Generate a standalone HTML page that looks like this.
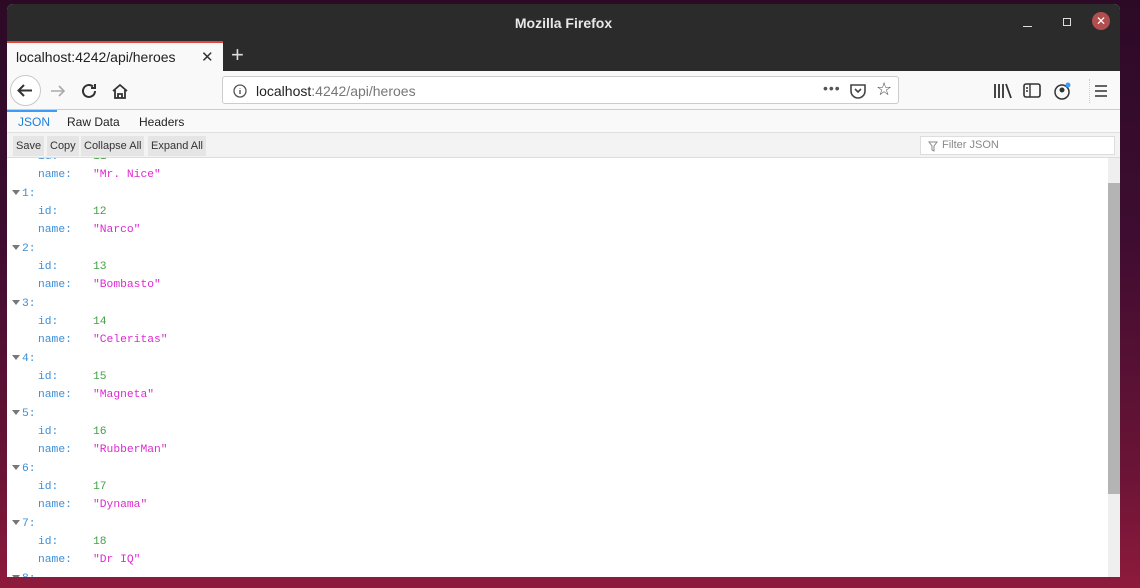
<!DOCTYPE html>
<html><head><meta charset="utf-8"><style>
*{margin:0;padding:0;box-sizing:border-box}
body{width:1140px;height:588px;overflow:hidden;position:relative;font-family:"Liberation Sans","DejaVu Sans",sans-serif;
background:linear-gradient(180deg,#2c0a26 0%,#3e0c30 40%,#6a1436 80%,#8e1a3c 100%)}
.win{position:absolute;left:7px;top:4px;width:1113px;height:573px;background:#fff;border-radius:6px 6px 0 0;overflow:hidden}
.title{position:absolute;left:0;top:0;width:100%;height:67px;background:#2b2b2b}
.title .t{position:absolute;top:11px;width:100%;text-align:center;color:#e8e8e8;font-weight:bold;font-size:14px}
.tab{position:absolute;left:0;top:37px;width:216px;height:30px;background:#f9f9fa;border-top:2px solid #e0473b}
.tab .l{position:absolute;left:9px;top:6px;font-size:14px;color:#222}
.tab .x{position:absolute;left:194px;top:5px;font-size:15px;color:#333}
.plus{position:absolute;left:224px;top:38px;color:#ddd;font-size:22px}
.nav{position:absolute;left:0;top:67px;width:100%;height:39px;background:#f9f9fa;border-bottom:1px solid #ccc}
.back{position:absolute;left:3px;top:4px;width:31px;height:31px;border-radius:50%;border:1px solid #c8c8c8;background:#fff}
.url{position:absolute;left:215px;top:5px;width:677px;height:28px;border:1px solid #ccc;border-radius:3px;background:#fff}
.url .u{position:absolute;left:33px;top:6px;font-size:14px;color:#222}
.url .u span{color:#777}
.jtabs{position:absolute;left:0;top:106px;width:100%;height:23px;background:#f9f9fa;border-bottom:1px solid #e0e0e0;font-size:12px}
.jtabs span{position:absolute;top:5px;color:#222}
.bar{position:absolute;left:0;top:129px;width:100%;height:25px;background:#f3f3f4;border-bottom:1px solid #ddd;font-size:11px}
.btn{position:absolute;top:3px;height:20px;background:#e5e5e6;color:#333;padding:4px 3px 0}
.filter{position:absolute;left:913px;top:3px;width:195px;height:19px;background:#fff;border:1px solid #ddd;color:#888;padding:2px 0 0 21px}
.content{position:absolute;left:0;top:154px;width:1101px;height:419px;overflow:hidden;background:#fff;font-family:"Liberation Mono","DejaVu Sans Mono",monospace;font-size:11.3px}
.row{position:absolute;height:18px;line-height:18px}
.k{color:#3c8fd6}.n{color:#43a047}.s{color:#dd2ad0}
.sb{position:absolute;left:1101px;top:154px;width:12px;height:419px;background:#efefef}
.th{position:absolute;left:1101px;top:179px;width:12px;height:311px;background:#b4b4b4}
.tri{display:inline-block;width:0;height:0;border-left:4px solid transparent;border-right:4px solid transparent;border-top:5px solid #777;margin-right:2px;vertical-align:1px}
</style></head><body>
<div class="win">
<div class="title"><div class="t">Mozilla Firefox</div>
<div style="position:absolute;left:1016px;top:22px;width:9px;height:1px;background:#ddd"></div>
<div style="position:absolute;left:1056px;top:14px;width:8px;height:8px;border:1px solid #ddd"></div>
<div style="position:absolute;left:1085px;top:8px;width:18px;height:18px;border-radius:50%;background:#b04e50;color:#fff;font-size:12px;text-align:center;line-height:18px">✕</div>
</div>
<div class="tab"><span class="l">localhost:4242/api/heroes</span><span class="x">✕</span></div>
<div class="plus">+</div>
<div class="nav">
<div class="back"><svg width="29" height="29" viewBox="0 0 29 29"><path d="M21 14.5H8M13 9l-5.5 5.5L13 20" stroke="#333" stroke-width="2" fill="none"/></svg></div>
<svg style="position:absolute;left:41px;top:10px" width="20" height="20"><path d="M3 10h13M11 5l5 5-5 5" stroke="#aaa" stroke-width="1.6" fill="none"/></svg>
<svg style="position:absolute;left:73px;top:10px" width="20" height="20"><path d="M15 10a6 6 0 1 1-2-4.5M15 3v4h-4" stroke="#333" stroke-width="2" fill="none"/></svg>
<svg style="position:absolute;left:103px;top:10px" width="20" height="20"><path d="M3 10l7-6 7 6M5 9v8h10V9M8 17v-4h4v4" stroke="#333" stroke-width="1.8" fill="none"/></svg>
<div class="url"><svg style="position:absolute;left:9px;top:6px" width="16" height="16"><circle cx="8" cy="8" r="6" stroke="#555" fill="none" stroke-width="1.3"/><path d="M8 7v4M8 5v.5" stroke="#555" stroke-width="1.4"/></svg>
<div class="u">localhost<span>:4242/api/heroes</span></div>
<div style="position:absolute;left:600px;top:3px;font-size:14px;color:#555;letter-spacing:1px">•••</div>
<svg style="position:absolute;left:626px;top:5px" width="18" height="18"><path d="M2 3h14v6a7 7 0 0 1-14 0z" stroke="#444" stroke-width="1.6" fill="none"/><path d="M6 7l3 3 3-3" stroke="#444" stroke-width="1.6" fill="none"/></svg>
<div style="position:absolute;left:653px;top:2px;font-size:18px;color:#444">☆</div>
</div>
<svg style="position:absolute;left:986px;top:12px" width="20" height="16"><path d="M2 1v14M6 1v14M10 1v14M13 1l5 14" stroke="#333" stroke-width="1.8"/></svg>
<svg style="position:absolute;left:1016px;top:12px" width="18" height="16"><rect x="1" y="1" width="16" height="13" rx="2" stroke="#333" stroke-width="1.6" fill="none"/><path d="M7 1v13M3 5h2M3 8h2" stroke="#333" stroke-width="1.4"/></svg>
<svg style="position:absolute;left:1047px;top:11px" width="18" height="18"><circle cx="8" cy="10" r="7" stroke="#333" stroke-width="1.5" fill="none"/><circle cx="8" cy="8" r="2.5" fill="#333"/><circle cx="14" cy="3" r="2.5" fill="#3d9cf5"/></svg>
<div style="position:absolute;left:1082px;top:8px;width:1px;height:24px;border-left:1px dotted #ccc"></div>
<svg style="position:absolute;left:1087px;top:13px" width="14" height="14"><path d="M1 2h12M1 7h12M1 12h12" stroke="#333" stroke-width="1.6"/></svg>
</div>
<div class="jtabs"><div style="position:absolute;left:0;top:0;width:50px;height:2px;background:#3d9cf5"></div>
<span style="left:11px;color:#1e7fd7">JSON</span><span style="left:60px">Raw Data</span><span style="left:132px">Headers</span></div>
<div class="bar"><div class="btn" style="left:6px">Save</div><div class="btn" style="left:40px">Copy</div><div class="btn" style="left:74px">Collapse All</div><div class="btn" style="left:141px">Expand All</div>
<div class="filter"><svg style="position:absolute;left:7px;top:4px" width="10" height="11"><path d="M1 1h8L6 5v5L4 9V5z" stroke="#888" fill="none"/></svg>Filter JSON</div></div>
<div class="content"></div>
<div class="sb"></div><div class="th"></div>
</div>
<script>
var c=document.querySelector('.content');var h='';
var data=[[12,'Narco'],[13,'Bombasto'],[14,'Celeritas'],[15,'Magneta'],[16,'RubberMan'],[17,'Dynama'],[18,'Dr IQ']];
function y(i){return (i*18.33-10).toFixed(1)}
h+='<div class="row" style="top:'+y(0)+'px;left:31px"><span class="k">id:</span></div><div class="row" style="top:'+y(0)+'px;left:86px"><span class="n">11</span></div>';
h+='<div class="row" style="top:'+y(1)+'px;left:31px"><span class="k">name:</span></div><div class="row" style="top:'+y(1)+'px;left:86px"><span class="s">"Mr. Nice"</span></div>';
for(var j=0;j<8;j++){var b=2+j*3;
h+='<div class="row" style="top:'+y(b)+'px;left:5px"><span class="tri"></span><span class="k">'+(j+1)+':</span></div>';
if(j<7){h+='<div class="row" style="top:'+y(b+1)+'px;left:31px"><span class="k">id:</span></div><div class="row" style="top:'+y(b+1)+'px;left:86px"><span class="n">'+data[j][0]+'</span></div>';
h+='<div class="row" style="top:'+y(b+2)+'px;left:31px"><span class="k">name:</span></div><div class="row" style="top:'+y(b+2)+'px;left:86px"><span class="s">"'+data[j][1]+'"</span></div>';}}
c.insertAdjacentHTML('beforeend',h);
</script>
</body></html>
